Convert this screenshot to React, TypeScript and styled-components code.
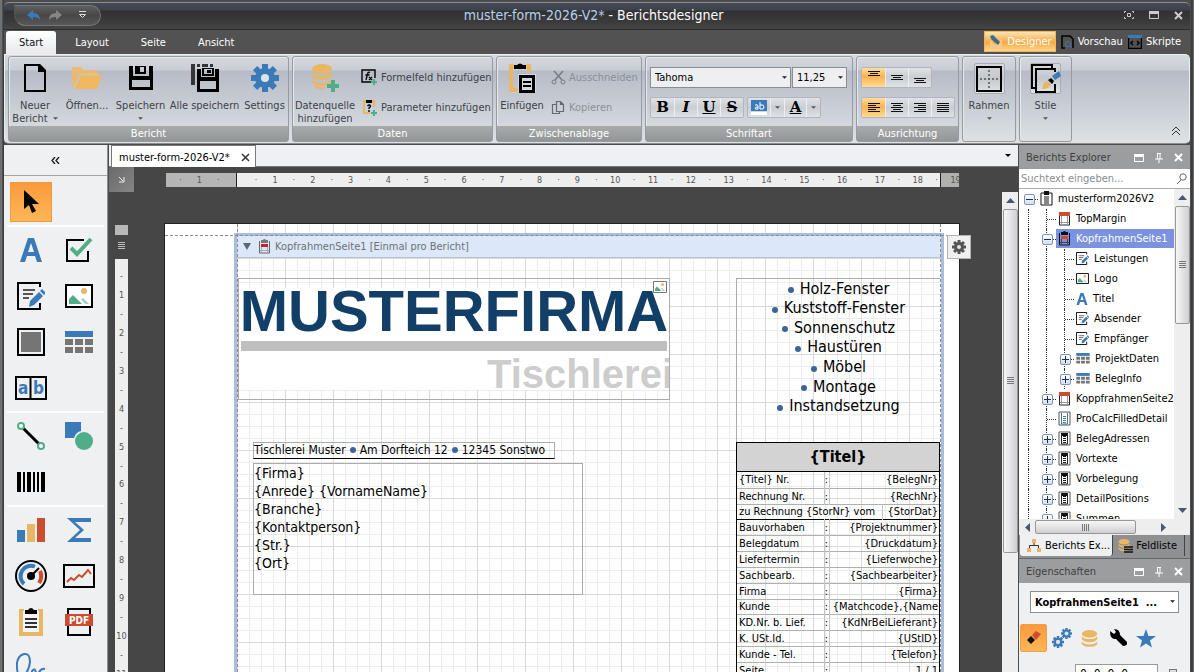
import React from "react";
import styled, { createGlobalStyle, css } from "styled-components";

const BLUE = "#3a7ab8";
const GREEN = "#4fae87";
const AMBER = "#e9b665";
const RED = "#cb4c2f";
const FACE = '"DejaVu Sans Condensed", "Noto Sans", sans-serif';

const GlobalStyle = createGlobalStyle`
  *, *::before, *::after { box-sizing: border-box; }
  html, body { margin: 0; height: 100%; }
  body { overflow: hidden; background: #55575a; }
  body, button, input, select { font-family: ${FACE}; font-size: 11px; line-height: 13px; }
  button { padding: 0; border: 0; background: none; color: inherit; }
  button, select { cursor: pointer; }
  svg { display: block; flex: none; }
`;

/* ---------- window frame ---------- */

const Window = styled.div`
  display: flex;
  flex-direction: column;
  height: 100vh;
  padding: 2px 4px 0;
  background: linear-gradient(to right, #6f7274 0, #6f7274 2px, #2d2d2d 3px, #4c4c4c 4px, #4c4c4c calc(100% - 3px), #2d2d2d calc(100% - 2px), #7b7d7f 100%);
`;

const TitleBar = styled.header`
  display: grid;
  grid-template-columns: 1fr auto 1fr;
  align-items: center;
  height: 28px;
  flex: none;
  padding: 0 7px 2px 0;
  border-top: 1px solid #8b8f95;
  border-bottom: 1px solid #2c2c2c;
  border-radius: 5px 5px 0 0;
  background: linear-gradient(#454a55 0, #3d424c 7px, #303132 8px, #3b3b3b 19px, #454545 100%);
`;

const QuickAccess = styled.div`
  display: flex;
  align-items: center;
  gap: 8px;
  width: 87px;
  height: 21px;
  margin-left: 10px;
  padding-left: 12px;
  border: 1px solid #757575;
  border-left-color: #555;
  border-radius: 0 11px 11px 12px;
  background: linear-gradient(#5f5f5f, #474747 50%, #575757);
  button:last-child { margin-left: 8px; }
`;

const WindowTitle = styled.h1`
  margin: 0;
  font-size: 14px;
  line-height: 18px;
  font-weight: 400;
  color: #fff;
  span { color: #b9cff0; }
`;

const WindowControls = styled.div`
  display: flex;
  justify-content: flex-end;
  align-items: center;
  gap: 15px;
`;

const TabRow = styled.div`
  display: flex;
  justify-content: space-between;
  height: 24px;
  flex: none;
  padding: 1px 9px 0 2px;
  background: #525252;
`;

const TabGroup = styled.div`
  display: flex;
  align-items: stretch;
`;

const RibbonTab = styled.button<{ $active?: boolean }>`
  padding: 0 13px;
  margin-right: 6px;
  border-radius: 3px 3px 0 0;
  color: ${(p) => (p.$active ? "#111" : "#fff")};
  background: ${(p) => (p.$active ? "linear-gradient(#fff, #e6e9ee)" : "none")};
`;

const ViewTab = styled.button<{ $active?: boolean }>`
  display: flex;
  align-items: center;
  gap: 4px;
  height: 21px;
  padding: 0 0 0 4px;
  margin-left: 1px;
  color: #fff;
  ${(p) => p.$active && css`
    padding-right: 3px;
    border: 1px solid #f3b35a;
    background: linear-gradient(#fde3b0, #f2a946 55%, #ffd88c);
  `}
`;

/* ---------- ribbon ---------- */

const Ribbon = styled.div`
  display: flex;
  gap: 3px;
  height: 90px;
  flex: none;
  padding: 1px 8px 1px 3px;
  border: 1px solid #eceef0;
  border-bottom-color: #8b8d8f;
  border-radius: 0 5px 5px 5px;
  background: linear-gradient(#d5d9df 0, #c9cdd5 15px, #b6bbc6 16px, #dde2e5 100%);
`;

const Group = styled.section<{ $w: number }>`
  display: flex;
  flex-direction: column;
  width: ${(p) => p.$w}px;
  flex: none;
  border: 1px solid #969ba3;
  border-radius: 3px;
  box-shadow: inset 1px 1px 0 #e6e9ec;
`;

const GroupBody = styled.div`
  display: flex;
  flex: 1;
  min-height: 0;
`;

const GroupCaption = styled.h2`
  margin: 0;
  height: 15px;
  flex: none;
  line-height: 15px;
  font-size: 11px;
  font-weight: 400;
  text-align: center;
  color: #fff;
  background: linear-gradient(#a7abac, #939696);
`;

const BigButton = styled.button<{ $w: number }>`
  display: flex;
  flex-direction: column;
  align-items: center;
  width: ${(p) => p.$w}px;
  padding-top: 6px;
  color: #3d4148;
  white-space: nowrap;
`;

const BigIcon = styled.span`
  display: grid;
  place-items: center;
  height: 30px;
  margin-bottom: 6px;
`;

const Line = styled.span`
  display: flex;
  align-items: center;
  gap: 5px;
  min-height: 13px;
`;

const SmallList = styled.div`
  display: flex;
  flex-direction: column;
  gap: 10px;
  padding-top: 10px;
  padding-left: 4px;
`;

const SmallButton = styled.button`
  display: flex;
  align-items: center;
  gap: 3px;
  height: 20px;
  color: #3d4148;
  white-space: nowrap;
  &:disabled { color: #8b9097; }
`;

const Controls = styled.div`
  display: flex;
  flex-direction: column;
  gap: 9px;
  padding: 10px 4px 0;
`;

const ControlRow = styled.div`
  display: flex;
  gap: 1px;
`;

const Combo = styled.span<{ $w: number; $h: number }>`
  position: relative;
  display: block;
  width: ${(p) => p.$w}px;
  height: ${(p) => p.$h}px;
  select {
    width: 100%;
    height: 100%;
    padding: 0 14px 0 4px;
    border: 1px solid #8a8d92;
    border-radius: 0;
    background: #eeeff0;
    color: #000;
    appearance: none;
  }
  svg { position: absolute; right: 4px; top: 50%; margin-top: -2px; pointer-events: none; }
`;

const Segments = styled.div`
  display: flex;
  height: 21px;
  border: 1px solid #b2b6bc;
  border-radius: 2px;
  background: linear-gradient(#dfe2e6, #c9ced4 50%, #dde3e5);
  & + & { margin-left: 2px; }
`;

const Segment = styled.button<{ $on?: boolean; $w?: number }>`
  display: grid;
  place-items: center;
  width: ${(p) => p.$w ?? 23}px;
  color: #000;
  font: 700 15px/15px "DejaVu Serif", serif;
  border-left: 1px solid #eceef0;
  &:first-child { border-left: 0; }
  ${(p) => p.$on && css`background: linear-gradient(#ffdf9d, #f9b351 45%, #ffdc93);`}
`;

const IconFrame = styled.span`
  display: grid;
  place-items: center;
  width: 31px;
  height: 31px;
  border: 1px solid #a9adb5;
  border-radius: 2px;
  background: linear-gradient(#d5d9dd, #c3c8cf 50%, #dfe4e6);
`;

const CollapseButton = styled.button`
  align-self: flex-end;
  margin: 0 0 6px auto;
`;

/* ---------- workspace ---------- */

const Workspace = styled.div`
  display: flex;
  flex: 1;
  min-height: 0;
  padding-top: 1px;
`;

const Toolbox = styled.aside`
  width: 104px;
  flex: none;
  overflow: hidden;
  border-right: 1px solid #8d9093;
  background: #eef0f2;
`;

const ToolboxHead = styled.button`
  display: grid;
  place-items: center;
  width: 100%;
  height: 31px;
  border-bottom: 1px solid #a2a5a8;
`;

const ToolGroup = styled.div`
  display: grid;
  grid-template-columns: repeat(2, 48px);
  grid-auto-rows: 46px;
  margin: 0 3px;
  border-bottom: 2px solid #fbfcfc;
  &:first-of-type { margin-top: 3px; }
`;

const Tool = styled.button<{ $on?: boolean }>`
  display: grid;
  place-items: center;
  width: 42px;
  height: 40px;
  margin: 3px;
  ${(p) => p.$on && css`
    border: 1px solid #ee9b3d;
    background: linear-gradient(#fb9a3c, #ffb657);
  `}
`;

const Center = styled.main`
  display: flex;
  flex-direction: column;
  flex: 1;
  min-width: 0;
  margin-left: 1px;
`;

const DocTabs = styled.div`
  display: flex;
  justify-content: space-between;
  height: 22px;
  flex: none;
  padding: 0 6px 0 2px;
  background: #eef0f3;
  border-bottom: 1px solid #777;
`;

const DocTab = styled.div`
  display: flex;
  align-items: center;
  gap: 11px;
  height: 22px;
  padding: 1px 5px 0 7px;
  border: 1px solid #77797c;
  border-bottom: 0;
  background: #fff;
`;

const Canvas = styled.div`
  display: grid;
  grid-template-columns: 25px 1fr 16px;
  grid-template-rows: 25px 1fr;
  flex: 1;
  min-height: 0;
  background: #464646;
  overflow: hidden;
`;

const Corner = styled.button`
  display: grid;
  place-items: center;
  background: linear-gradient(135deg, #6a6a6a, #858585);
`;

const HRuler = styled.div`
  width: 793px;
  height: 14px;
  margin: 6px 0 0 32px;
  overflow: hidden;
  background: linear-gradient(to right, #b5b5b5 70px, #222 70px, #222 71px, #eee 71px, #eee 774px, #222 774px, #222 775px, #b0b0b0 775px);
`;

const HRulerStrip = styled.div`
  display: grid;
  grid-template-columns: repeat(42, 1fr);
  width: 794px;
  height: 14px;
  margin-left: 5px;
`;

const VRulerColumn = styled.div`
  display: flex;
  flex-direction: column;
  align-items: center;
  padding-top: 33px;
  overflow: hidden;
`;

const VRulerStart = styled.div`
  width: 13px;
  height: 10px;
  margin-bottom: 7px;
  background: #b8b8b8;
  flex: none;
`;

const VRuler = styled.div`
  display: grid;
  grid-template-rows: repeat(22, 1fr);
  width: 13px;
  height: 424px;
  flex: none;
  margin-top: 9px;
  padding-top: 8px;
  background: #eeeeee;
`;

const Tick = styled.span`
  display: grid;
  place-items: center;
  font-size: 9px;
  line-height: 12px;
  color: #555;
`;

const PageArea = styled.div`
  padding: 32px 0 0 31px;
  min-width: 0;
`;

const Page = styled.article`
  position: relative;
  width: 794px;
  height: 1123px;
  background: #fff;
  box-shadow: 0 0 0 1px #222;
  color: #000;
`;

const Grid = styled.div`
  position: absolute;
  inset: 0 18px 0 72px;
  background-image:
    linear-gradient(to right, #d8dadc 1px, transparent 1px),
    linear-gradient(#d8dadc 1px, transparent 1px),
    linear-gradient(to right, #ebebeb 1px, transparent 1px),
    linear-gradient(#ebebeb 1px, transparent 1px);
  background-size: 48px 48px, 48px 48px, 12px 12px, 12px 12px;
  background-position: 0 34px;
`;

const MarginTop = styled.div`
  position: absolute;
  inset: 11px 0 auto 0;
  border-top: 1px dashed #8c8c8c;
`;

const MarginSides = styled.div`
  position: absolute;
  inset: 0 18px 0 72px;
  border: 0 dashed #8c8c8c;
  border-width: 0 1px;
`;

const Band = styled.section`
  position: absolute;
  inset: 9px 15px -4px 69px;
  border: 3px solid #a9bedb;
`;

const BandHead = styled.header`
  display: flex;
  align-items: center;
  gap: 7px;
  height: 22px;
  padding: 0 0 1px 6px;
  border-bottom: 1px solid #b9c3d1;
  background: #dce8f9;
  color: #6d7176;
  svg + svg { margin-right: -3px; }
`;

const GearButton = styled.button`
  position: absolute;
  left: 782px;
  top: 11px;
  display: grid;
  place-items: center;
  width: 24px;
  height: 24px;
  border: 1px solid #b3b3b3;
  background: #f0f0f0;
`;

const Item = styled.div<{ $x: number; $y: number; $w: number; $h?: number }>`
  position: absolute;
  left: ${(p) => p.$x}px;
  top: ${(p) => p.$y}px;
  width: ${(p) => p.$w}px;
  height: ${(p) => (p.$h ? `${p.$h}px` : "auto")};
  border: 1px solid #ababab;
`;

const LogoBox = styled(Item)`
  overflow: hidden;
  padding-top: 9px;
  font-family: "Liberation Sans", sans-serif;
  font-weight: 700;
  white-space: nowrap;
`;

const LogoArt = styled.div`
  background: #fff;
  height: 102px;
`;

const LogoName = styled.div`
  display: flex;
  justify-content: center;
  height: 53px;
  font-size: 58px;
  line-height: 45px;
  color: #123f68;
`;

const LogoBar = styled.div`
  height: 10px;
  margin: 0 2px;
  background: #bfbfbf;
`;

const LogoSub = styled.div`
  margin-left: 248px;
  font-size: 40px;
  line-height: 46px;
  color: #cdcdcd;
`;

const LogoTag = styled.span`
  position: absolute;
  right: 2px;
  top: 2px;
`;

const Services = styled(Item)`
  border-width: 1px 0 0 1px;
`;

const ServiceList = styled.ul`
  display: grid;
  grid-template-rows: repeat(7, 1fr);
  height: 137px;
  margin: 0;
  padding: 0;
  list-style: none;
  font-size: 16px;
  line-height: 18px;
  li { display: flex; justify-content: center; align-items: center; gap: 6px; }
  li::before { content: ""; width: 6px; height: 6px; margin-top: 3px; border-radius: 50%; background: #3b659a; }
`;

const Sender = styled(Item)`
  display: flex;
  align-items: center;
  gap: 4px;
  padding-bottom: 2px;
  font-size: 12px;
  line-height: 14px;
  border-bottom: 1px solid #000;
  white-space: nowrap;
`;

const Dot = styled.i`
  width: 6px;
  height: 6px;
  border-radius: 50%;
  background: #3b659a;
`;

const Recipient = styled(Item)`
  font-size: 14px;
  line-height: 18px;
`;

const RecipientLines = styled.div`
  display: grid;
  grid-template-rows: repeat(6, 1fr);
  height: 106px;
`;

const InfoBox = styled(Item)`
  border: 1px solid #000;
`;

const InfoTable = styled.table`
  width: 100%;
  border-collapse: collapse;
  table-layout: fixed;
  line-height: 13px;
  caption {
    height: 29px;
    font-size: 16px;
    font-weight: 700;
    line-height: 27px;
    background: #d3d3d3;
    border-bottom: 1px solid #000;
  }
`;

const InfoCol = styled.col<{ $w?: number }>`
  width: ${(p) => (p.$w ? `${p.$w}px` : "auto")};
`;

const InfoRow = styled.tr<{ $tight?: boolean; $rule?: boolean }>`
  height: ${(p) => (p.$tight ? 15 : 16)}px;
  border-bottom: 1px solid ${(p) => (p.$rule ? "#000" : "#b0b0b0")};
  th, td {
    padding: 0 2px;
    font-weight: 400;
    text-align: left;
    white-space: nowrap;
    overflow: hidden;
  }
  td:last-child { text-align: right; border-left: 1px solid #c4c4c4; padding-right: 1px; }
  td:nth-child(2):not(:last-child) { padding: 0; text-align: center; border-left: 1px solid #c4c4c4; }
`;

/* ---------- scroll bars ---------- */

const VScroll = styled.div`
  display: flex;
  flex-direction: column;
  align-items: center;
  width: 16px;
  background: #eeeeee;
  grid-row: 2;
  grid-column: 3;
`;

const ScrollArrow = styled.button<{ $w?: number; $end?: boolean }>`
  display: grid;
  place-items: center;
  width: ${(p) => p.$w ?? 16}px;
  height: 17px;
  flex: none;
  margin-top: ${(p) => (p.$end ? "auto" : "0")};
`;

const VThumb = styled.div<{ $h: number }>`
  display: grid;
  place-items: center;
  width: 15px;
  height: ${(p) => p.$h}px;
  border: 1px solid #979797;
  border-radius: 2px;
  background: linear-gradient(to right, #f6f6f6, #e4e4e6 50%, #cdced1);
`;

const HScroll = styled.div`
  display: flex;
  align-items: center;
  height: 16px;
  flex: none;
  background: #eeeeee;
`;

const HThumb = styled.div`
  display: grid;
  place-items: center;
  flex: 1;
  height: 14px;
  border: 1px solid #979797;
  border-radius: 2px;
  background: linear-gradient(#f6f6f6, #e4e4e6 50%, #cdced1);
`;

/* ---------- side panels ---------- */

const Side = styled.aside`
  display: flex;
  flex-direction: column;
  width: 171px;
  flex: none;
  margin-left: 1px;
  background: #eef0f2;
`;

const Explorer = styled.section`
  display: flex;
  flex-direction: column;
  flex: 1;
  min-height: 0;
`;

const PanelHead = styled.header`
  display: flex;
  align-items: center;
  gap: 11px;
  height: 24px;
  flex: none;
  padding: 1px 7px 0;
  background: #9c9d9e;
  color: #3e3f40;
  h2 { margin: 0; font-size: 11px; font-weight: 400; flex: 1; }
`;

const SearchBox = styled.label`
  display: flex;
  align-items: center;
  height: 20px;
  flex: none;
  padding: 0 3px 0 2px;
  border-bottom: 1px solid #aaa;
  background: #fff;
  input { flex: 1; min-width: 0; padding: 0; border: 0; outline: 0; background: none; }
  input::placeholder { color: #8a8d90; opacity: 1; }
`;

const TreeArea = styled.div`
  display: flex;
  flex: 1;
  min-height: 0;
`;

const Tree = styled.ul`
  flex: 1;
  min-width: 0;
  margin: 0;
  padding: 0 0 0 1px;
  overflow: hidden;
  list-style: none;
  background: #fff;
`;

const TreeRow = styled.li`
  display: flex;
  height: 20px;
  white-space: nowrap;
`;

const Guide = styled.span<{ $line?: boolean; $stub?: boolean }>`
  position: relative;
  display: grid;
  place-items: center;
  width: 18px;
  flex: none;
  &::before {
    content: "";
    position: absolute;
    inset: 0 auto 0 8px;
    border-left: ${(p) => (p.$line ? "1px dotted #333" : "0")};
  }
  &::after {
    content: "";
    position: absolute;
    inset: 10px 0 auto 9px;
    border-top: ${(p) => (p.$stub ? "1px dotted #333" : "0")};
  }
`;

const Expander = styled.button`
  position: relative;
  z-index: 1;
  display: grid;
  place-items: center;
  width: 11px;
  height: 11px;
  border: 1px solid #7f95b8;
  border-radius: 2px;
  background: linear-gradient(#fff, #d3def0);
`;

const Node = styled.span<{ $on?: boolean }>`
  display: flex;
  align-items: center;
  gap: 5px;
  flex: 1;
  height: 19px;
  padding-left: 2px;
  color: ${(p) => (p.$on ? "#fff" : "#000")};
  background: ${(p) => (p.$on ? "#7b93de" : "none")};
`;

const PanelTabs = styled.div`
  display: flex;
  height: 23px;
  flex: none;
  padding: 0 4px 2px 1px;
  background: #8f9091;
`;

const PanelTab = styled.button<{ $on?: boolean }>`
  display: flex;
  align-items: center;
  gap: 4px;
  padding: 0 2px 0 7px;
  white-space: nowrap;
  border-right: 1px solid #444;
  background: ${(p) => (p.$on ? "#eef0f2" : "none")};
  border-radius: ${(p) => (p.$on ? "0 0 3px 3px" : "0")};
  & + & { gap: 3px; padding-left: 5px; padding-right: 7px; }
`;

const Properties = styled.section`
  height: 114px;
  flex: none;
  overflow: hidden;
  border-top: 1px solid #666;
`;

const PropertyBody = styled.div`
  display: flex;
  flex-direction: column;
  padding: 8px 11px 0;
  select { background: #fff; font-weight: 700; }
`;

const PropertyTabs = styled.div`
  display: flex;
  margin: 11px 0 0 -10px;
  gap: 1px;
`;

const PropertyTab = styled.button<{ $on?: boolean }>`
  display: grid;
  place-items: center;
  width: 27px;
  height: 28px;
  ${(p) => p.$on && css`
    border: 1px solid #f0a044;
    border-radius: 2px;
    background: linear-gradient(#fb9a3c, #ffb657);
  `}
`;

const PropertyRow = styled.div`
  display: flex;
  justify-content: space-between;
  margin: 12px 2px 0 45px;
  input[type="text"] { width: 83px; height: 20px; padding: 2px 4px; border: 1px solid #999; font-size: 12px; }
  input[type="checkbox"] { width: 8px; height: 8px; margin: 5px 0 0; appearance: none; border: 1px solid #777; background: #ddd; }
`;

/* ---------- icons ---------- */

type IconProps = { w?: number; h?: number; vb?: string; children: React.ReactNode };
const Icon = ({ w = 16, h = w, vb, children }: IconProps) => (
  <svg width={w} height={h} viewBox={vb ?? `0 0 ${w} ${h}`} fill="none" aria-hidden="true">{children}</svg>
);

const Caret = ({ color = "#555", size = 5 }) => (
  <Icon w={size} h={3} vb="0 0 6 3"><path d="M0 0h6L3 3z" fill={color} /></Icon>
);

const Plus = ({ x, y, s }: { x: number; y: number; s: number }) => (
  <path d={`M${x + s / 2} ${y}v${s}M${x} ${y + s / 2}h${s}`} stroke={GREEN} strokeWidth={s / 3} />
);

const NewDoc = () => (
  <Icon w={24} h={28}><path d="M2 1h14l6 6v20H2z" stroke="#000" strokeWidth="2" /><path d="M15 0h2l6 6v2h-8z" fill="#000" /></Icon>
);
const OpenFolder = () => (
  <Icon w={32} h={26}><path d="M1 22V2h9l2 3h14v5H9L3 22z" fill="#eaba74" /><path d="M10 10h21l-5 14H4z" fill="#f0b85f" /><path d="M9.500 9.500h18M9.500 9.500L4 21" stroke="#cfc8bd" /></Icon>
);
const Floppy = () => (
  <Icon w={26} h={26}><path fillRule="evenodd" d="M1 1h4v10h16V1h4v24H1zM4 15v7h18v-7zM7 1h11v8H7zM12 2v5h4V2z" fill="#000" /></Icon>
);
const FloppyAll = () => (
  <Icon w={30} h={30}>
    <path d="M1 1h4v21H1zM7 1h3v3H7zM12 1h6v3h-6zM20 1h3v3h-3z" fill="#333539" />
    <path fillRule="evenodd" d="M7 6h4v8h14V6h4v23H7zM10 18v8h16v-8zM12 5h12v8H12zM14 6v5h8V6zM17 7h4v3h-4z" fill="#000" />
  </Icon>
);
const Gear = ({ size = 28, color = BLUE, hole = 4 }) => (
  <Icon w={size} h={size} vb="-14 -14 28 28">
    {[0, 45, 90, 135].map((a) => <rect key={a} x="-3" y="-14" width="6" height="28" fill={color} transform={`rotate(${a})`} />)}
    <circle r="10" fill={color} />
    <circle r={hole} fill="#dfe3e8" />
  </Icon>
);
const Coins = () => (
  <>
    <ellipse cx="11" cy="5" rx="10" ry="5" fill={AMBER} />
    <path d="M1 8c3 5 17 5 20 0v4c-3 5-17 5-20 0zM1 15c3 5 17 5 20 0v3c-3 5-17 5-20 0z" fill={AMBER} />
  </>
);
const DataAdd = () => (
  <Icon w={28} h={28}><Coins /><path d="M3 21q5 3 11 2v2q-7 1-11-2z" fill={AMBER} /><Plus x={16} y={16} s={12} /></Icon>
);
const DataStack = ({ s = 18 }) => <Icon w={s} h={s} vb="0 0 22 22"><Coins /></Icon>;
const FieldAdd = () => (
  <Icon w={17} h={16}>
    <path d="M10 13H1V1h13v8" stroke="#000" strokeWidth="1.4" />
    <path d="M9 3.500q-2-1-2.500 1.500L5 11M4.500 6h4M8 8l3 3M11 8l-3 3" stroke="#000" strokeWidth="1.300" />
    <Plus x={10} y={10} s={6} />
  </Icon>
);
const ParamAdd = () => (
  <Icon w={17} h={17}>
    <path d="M5 2H3v12h6M11 2h2v6" stroke={AMBER} strokeWidth="2" />
    <path d="M5 1h6v3H5z" fill="#000" />
    <path d="M6.500 7q2-2 3 0q0 1-1.500 2v1M8 11v2" stroke="#000" strokeWidth="1.400" />
    <Plus x={10} y={11} s={6} />
  </Icon>
);
const Paste = () => (
  <Icon w={28} h={30}>
    <path d="M6 3H3v24h7M18 3h3v6" stroke={AMBER} strokeWidth="4" />
    <path d="M6 2h3q3-3 6 0h3v4H6z" fill="#000" />
    <path d="M10 11h18v19H10z" fill="#d3d8de" />
    <path d="M12.500 13.500h13v15h-13z" stroke="#000" strokeWidth="3" />
    <path d="M15 19h8M15 23h8" stroke="#000" strokeWidth="2" />
  </Icon>
);
const Scissors = () => (
  <Icon w={15} h={15}><path d="M3 1l8 9M12 1l-8 9" stroke="#777b81" strokeWidth="1.500" /><circle cx="3" cy="12" r="2" stroke="#777b81" /><circle cx="12" cy="12" r="2" stroke="#777b81" /></Icon>
);
const CopyIcon = () => (
  <Icon w={15} h={15}><path d="M5 13.500H1.500V4.500H5M5.500 1.500h4l3 3v7h-7zM9.500 1.500v3h3M8.500 11.500v2h-4" stroke="#666a70" strokeWidth="1.200" /></Icon>
);
const AlignIcon = ({ lines, dy = 0 }: { lines: [number, number][]; dy?: number }) => (
  <Icon w={14} h={14}>
    {lines.map(([x, w], i) => <path key={i} d={`M${x} ${i * 2 + 2.5 + dy}h${w}`} stroke="#111" />)}
  </Icon>
);
const Highlight = () => (
  <Icon w={16} h={15}>
    <rect width="16" height="11" fill={BLUE} /><rect y="12" width="16" height="3" fill="#fff" />
    <path d="M4 5q3-1 3 1v3q-3 1-3-1q0-1 3-1M9 2v7q4 1 4-2t-4-2" stroke="#fff" />
  </Icon>
);
const FrameIcon = () => (
  <Icon w={26} h={26}><path d="M1 1h24v24H1z" stroke="#000" strokeWidth="2" /><path d="M13 4v18M4 13h18" stroke="#555" strokeWidth="1.500" strokeDasharray="2 2" /></Icon>
);
const Styles = () => (
  <Icon w={30} h={30}>
    <path d="M4 24H1V1h20v3" stroke="#000" strokeWidth="2" />
    <path d="M24 8V5H5v23h19v-8" stroke="#000" strokeWidth="2" />
    <path d="M11 25q1-7 5-8l4 3q-1 5-9 5z" fill={AMBER} /><path d="M17 16l3-2 3 3-2 3z" fill="#000" />
    <path d="M21 12l7-5 2 5-6 4z" fill={BLUE} />
  </Icon>
);
const DoubleUp = () => <Icon w={10} h={10}><path d="M1 5l4-4 4 4M1 9l4-4 4 4" stroke="#333" /></Icon>;

const Cursor = () => <Icon w={18} h={25}><path d="M2 0v19l5-4 3 8 4-2-4-7h7z" fill="#000" /></Icon>;
const LetterA = ({ s = 24 }) => (
  <Icon w={s} h={s} vb="0 0 24 24"><path fillRule="evenodd" d="M9 0h6l8 24h-5l-2-6H8l-2 6H1zM12 5l-3 9h6z" fill={BLUE} /></Icon>
);
const CheckTool = () => (
  <Icon w={28} h={26}><path d="M19 3H2v21h21V14" stroke="#000" strokeWidth="2" /><path d="M6 11l6 6L26 2" stroke={GREEN} strokeWidth="4" /></Icon>
);
const RichText = ({ s = 28 }) => (
  <Icon w={s} h={s} vb="0 0 28 28">
    <path d="M23 5V1H1v26h22v-6" stroke="#000" strokeWidth="2" />
    <path d="M6 8h12M6 12h10M6 16h6" stroke="#555" strokeWidth="1.800" />
    <path d="M13 19l9-9 4 4-9 9-5 2zM23 9l2-2 4 4-2 2z" fill={BLUE} />
  </Icon>
);
const Picture = ({ s = 28, frame = "#000" }) => (
  <Icon w={s} h={Math.round(s * 0.86)} vb="0 0 28 24">
    <path d="M1 1h26v22H1z" stroke={frame} strokeWidth="2" fill="#fff" />
    <circle cx="19" cy="7" r="3" fill={AMBER} /><path d="M4 20v-5l4-4 9 9z" fill={GREEN} /><path d="M16 15l2-1 6 6h-4z" fill="#a3cfbb" />
  </Icon>
);
const PanelTool = () => <Icon w={28}><path d="M1 1h26v26H1z" stroke="#000" strokeWidth="2" /><path d="M4 4h20v20H4z" fill="#757575" /></Icon>;
const TableTool = ({ s = 28 }) => (
  <Icon w={s} h={Math.round(s * 0.82)} vb="0 0 28 23"><path d="M0 0h28v6H0z" fill={BLUE} /><path d="M0 8h8v6H0zM10 8h8v6h-8zM20 8h8v6h-8zM0 16h8v6H0zM10 16h8v6h-8zM20 16h8v6h-8z" fill="#757575" /></Icon>
);
const CharComb = () => (
  <Icon w={32} h={24}>
    <path d="M1 1h30v22H1zM15.500 1v22" stroke="#000" strokeWidth="2" />
    <text x="3" y="18" fontSize="17" fontWeight="700" fill={BLUE}>a</text><text x="18" y="18" fontSize="17" fontWeight="700" fill={BLUE}>b</text>
  </Icon>
);
const LineTool = () => (
  <Icon w={28}><path d="M6 6l16 16" stroke="#000" strokeWidth="3" /><circle cx="4" cy="4" r="3" stroke={GREEN} strokeWidth="2" fill="#fff" /><circle cx="24" cy="24" r="3" stroke={GREEN} strokeWidth="2" fill="#fff" /></Icon>
);
const ShapeTool = () => <Icon w={28}><path d="M0 0h16v9q-5 1-7 7H0z" fill={BLUE} /><circle cx="19" cy="19" r="9" fill={GREEN} /></Icon>;
const Barcode = () => <Icon w={28} h={20}><path d="M0 0h4v20H0zM6 0h2v20H6zM10 0h4v20h-4zM16 0h2v20h-2zM20 0h2v20h-2zM24 0h4v20h-4z" fill="#000" /></Icon>;
const ChartTool = () => <Icon w={28} h={24}><path d="M0 12h8v12H0z" fill={BLUE} /><path d="M10 6h8v18h-8z" fill={AMBER} /><path d="M20 0h8v24h-8z" fill={RED} /></Icon>;
const Sigma = () => <Icon w={24}><path d="M0 0h24v4H8l9 8-9 8h16v4H0l13-12z" fill={BLUE} /></Icon>;
const Gauge = () => (
  <Icon w={32}>
    <circle cx="16" cy="16" r="15" stroke="#000" strokeWidth="2" />
    <path d="M9 24A10.500 10.500 0 0 1 20 6.500" stroke={BLUE} strokeWidth="4" /><path d="M25 11q3 6-1 12" stroke={RED} strokeWidth="4" />
    <circle cx="16" cy="16" r="4" fill="#000" /><path d="M16 16l8-8" stroke="#000" strokeWidth="2" />
  </Icon>
);
const Spark = () => <Icon w={32} h={24}><path d="M1 1h30v22H1z" stroke="#000" strokeWidth="2" /><path d="M4 18l4-4 3 2 5-5 3 2 6-7 3 4" stroke={RED} strokeWidth="2" /></Icon>;
const ClipTool = () => (
  <Icon w={24} h={28}><path d="M5 3H2v23h20V3h-3" stroke={AMBER} strokeWidth="4" /><path d="M4 3h16v21H4z" fill="#f4f5f6" /><path d="M6 2h3q3-4 6 0h3v4H6z" fill="#000" /><path d="M6 11h12M6 15h12M6 19h12" stroke="#333" strokeWidth="2" /></Icon>
);
const PdfTool = () => (
  <Icon w={28}><path d="M3 1h22v26H3z" stroke="#000" strokeWidth="2" /><path d="M0 6h28v12H0z" fill={RED} /><text x="14" y="16" fontSize="10" fontWeight="700" textAnchor="middle" fill="#fff">PDF</text></Icon>
);
const Signature = () => <Icon w={30} h={32}><path d="M1 30q12-8 13-20Q14 1 8 2Q0 4 1 16q1 12 9 14q5 0 6-11q3-4 4 2q-1 6 2 1q3-6 7-5" stroke={BLUE} strokeWidth="2" /></Icon>;

const ReportIcon = () => <Icon w={13} h={15}><path d="M1 2h11v12H1zM4 6h5M4 8h5M4 10h5M4 12h5" stroke="#111" /><path d="M4 0h5v4H4z" fill="#111" /></Icon>;
const MarginIcon = () => <Icon w={13} h={14}><path d="M1.500 1v12h10V1" stroke="#222" /><path d="M3.500 4v8M9.500 4v8M2 10.500h9" stroke="#999" /><path d="M1 0h11v4H1z" fill={RED} /></Icon>;
const BandIcon = ({ muted = false }) => (
  <Icon w={13} h={15}><path d="M1.500 2v12h10V2" stroke={muted ? "#666" : "#111"} /><path d="M3.500 5v8M9.500 5v8M2 11.500h9" stroke={muted ? "#aaa" : "#444"} /><path d="M3 1h2q1-2 3 0h2v3H3z" fill={muted ? "#777" : "#111"} /><path d="M3 5h7v3H3z" fill={muted ? "#c5202c" : RED} /></Icon>
);
const DetailIcon = ({ clip = true }) => (
  <Icon w={13} h={15}><path d="M1 1h11v13H1z" stroke="#555" /><path d="M3.500 2v11h6V2M5 5.500h3M5 7.500h3M5 9.500h3M5 11.500h3" stroke={clip ? "#222" : "#4c7795"} />{clip && <path d="M4 2h5v3H4z" fill="#111" />}</Icon>
);

const PinIcon = () => <Icon w={8} h={10}><path d="M2.500 1v5M5 1v5M2 .5h4M0 6h8M4 6v4" stroke="#fff" /></Icon>;
const RestoreIcon = ({ c = "#fff" }) => <Icon w={10} h={8}><path d="M.5 1v6.500h9V1" stroke={c} /><path d="M0 0h10v3H0z" fill={c} /></Icon>;
const CloseIcon = ({ c = "#fff", s = 9 }) => <Icon w={s} vb="0 0 9 9"><path d="M1 1l7 7M8 1L1 8" stroke={c} strokeWidth="2" /></Icon>;
const Search = () => <Icon w={11} h={12}><circle cx="7" cy="4" r="3.200" stroke="#666" /><path d="M5 7l-4 4" stroke="#666" /></Icon>;
const Tri = ({ d }: { d: string }) => <Icon w={9}><path d={d} fill="#4a5673" /></Icon>;
const GripH = () => <Icon w={7} h={8}><path d="M0 .5h7M0 2.500h7M0 4.500h7M0 6.500h7" stroke="#777" /></Icon>;
const GripV = () => <Icon w={8} h={7}><path d="M.5 0v7M2.500 0v7M4.500 0v7M6.500 0v7" stroke="#777" /></Icon>;

/* ---------- data ---------- */

const ticks = Array.from({ length: 42 }, (_, i) => (i - 3) / 2);
const vTicks = Array.from({ length: 22 }, (_, i) => (i + 1) / 2);

const services = ["Holz-Fenster", "Kuststoff-Fenster", "Sonnenschutz", "Haustüren", "Möbel", "Montage", "Instandsetzung"];
const recipient = ["{Firma}", "{Anrede} {VornameName}", "{Branche}", "{Kontaktperson}", "{Str.}", "{Ort}"];
const info: [string, string][] = [
  ["Bauvorhaben", "{Projektnummer}"], ["Belegdatum", "{Druckdatum}"], ["Liefertermin", "{Lieferwoche}"],
  ["Sachbearb.", "{Sachbearbeiter}"], ["Firma", "{Firma}"], ["Kunde", "{Matchcode},{Name"],
  ["KD.Nr. b. Lief.", "{KdNrBeiLieferant}"], ["K. USt.Id.", "{UStID}"], ["Kunde - Tel.", "{Telefon}"], ["Seite", "1 / 1"],
];

type TreeItem = { level: number; text: string; icon: React.ReactNode; sign?: "+" | "-"; on?: boolean };
const tree: TreeItem[] = [
  { level: 0, text: "musterform2026V2", icon: <ReportIcon />, sign: "-" },
  { level: 1, text: "TopMargin", icon: <MarginIcon /> },
  { level: 1, text: "KopfrahmenSeite1", icon: <BandIcon />, sign: "-", on: true },
  { level: 2, text: "Leistungen", icon: <RichText s={13} /> },
  { level: 2, text: "Logo", icon: <Picture s={13} /> },
  { level: 2, text: "Titel", icon: <LetterA s={12} /> },
  { level: 2, text: "Absender", icon: <RichText s={13} /> },
  { level: 2, text: "Empfänger", icon: <RichText s={13} /> },
  { level: 2, text: "ProjektDaten", icon: <TableTool s={14} />, sign: "+" },
  { level: 2, text: "BelegInfo", icon: <TableTool s={14} />, sign: "+" },
  { level: 1, text: "KoppfrahmenSeite2", icon: <MarginIcon />, sign: "+" },
  { level: 1, text: "ProCalcFilledDetail", icon: <DetailIcon clip={false} /> },
  { level: 1, text: "BelegAdressen", icon: <DetailIcon />, sign: "+" },
  { level: 1, text: "Vortexte", icon: <DetailIcon />, sign: "+" },
  { level: 1, text: "Vorbelegung", icon: <DetailIcon />, sign: "+" },
  { level: 1, text: "DetailPositions", icon: <DetailIcon />, sign: "+" },
  { level: 1, text: "Summen", icon: <DetailIcon />, sign: "+" },
];

const toolGroups: [string, React.ReactNode][][] = [
  [["Zeiger", <Cursor />]],
  [["Beschriftung", <LetterA />], ["Kontrollkästchen", <CheckTool />], ["Rich Text", <RichText />], ["Bild", <Picture />],
    ["Panel", <PanelTool />], ["Tabelle", <TableTool />], ["Zeichenkamm", <CharComb />]],
  [["Linie", <LineTool />], ["Form", <ShapeTool />], ["Barcode", <Barcode />]],
  [["Diagramm", <ChartTool />], ["Summe", <Sigma />], ["Anzeige", <Gauge />], ["Sparkline", <Spark />],
    ["Unterbericht", <ClipTool />], ["PDF", <PdfTool />], ["Signatur", <Signature />]],
];

/* ---------- sections ---------- */

const RibbonBar = () => (
  <Ribbon>
    <Group $w={281}>
      <GroupBody>
        <BigButton $w={52}><BigIcon><NewDoc /></BigIcon><Line>Neuer</Line><Line>Bericht <Caret /></Line></BigButton>
        <BigButton $w={52}><BigIcon><OpenFolder /></BigIcon><Line>Öffnen...</Line></BigButton>
        <BigButton $w={55}><BigIcon><Floppy /></BigIcon><Line>Speichern</Line><Line><Caret /></Line></BigButton>
        <BigButton $w={73}><BigIcon><FloppyAll /></BigIcon><Line>Alle speichern</Line></BigButton>
        <BigButton $w={47}><BigIcon><Gear /></BigIcon><Line>Settings</Line></BigButton>
      </GroupBody>
      <GroupCaption>Bericht</GroupCaption>
    </Group>
    <Group $w={201}>
      <GroupBody>
        <BigButton $w={64}><BigIcon><DataAdd /></BigIcon><Line>Datenquelle</Line><Line>hinzufügen</Line></BigButton>
        <SmallList>
          <SmallButton><FieldAdd />Formelfeld hinzufügen</SmallButton>
          <SmallButton><ParamAdd />Parameter hinzufügen</SmallButton>
        </SmallList>
      </GroupBody>
      <GroupCaption>Daten</GroupCaption>
    </Group>
    <Group $w={146}>
      <GroupBody>
        <BigButton $w={50}><BigIcon><Paste /></BigIcon><Line>Einfügen</Line></BigButton>
        <SmallList>
          <SmallButton disabled><Scissors />Ausschneiden</SmallButton>
          <SmallButton disabled><CopyIcon />Kopieren</SmallButton>
        </SmallList>
      </GroupBody>
      <GroupCaption>Zwischenablage</GroupCaption>
    </Group>
    <Group $w={208}>
      <GroupBody>
        <Controls>
          <ControlRow>
            <Combo $w={141} $h={21}><select aria-label="Schriftart"><option>Tahoma</option></select><Caret color="#222" /></Combo>
            <Combo $w={55} $h={21}><select aria-label="Schriftgröße"><option>11,25</option></select><Caret color="#222" /></Combo>
          </ControlRow>
          <ControlRow>
            <Segments>
              <Segment aria-label="Fett">B</Segment>
              <Segment aria-label="Kursiv"><em>I</em></Segment>
              <Segment aria-label="Unterstrichen"><u>U</u></Segment>
              <Segment aria-label="Durchgestrichen"><s>S</s></Segment>
            </Segments>
            <Segments>
              <Segment $w={22} aria-label="Hintergrundfarbe"><Highlight /></Segment>
              <Segment $w={14} aria-label="Hintergrundfarbe wählen"><Caret /></Segment>
              <Segment $w={22} aria-label="Schriftfarbe"><u>A</u></Segment>
              <Segment $w={14} aria-label="Schriftfarbe wählen"><Caret /></Segment>
            </Segments>
          </ControlRow>
        </Controls>
      </GroupBody>
      <GroupCaption>Schriftart</GroupCaption>
    </Group>
    <Group $w={103}>
      <GroupBody>
        <Controls>
          <ControlRow>
            <Segments>
              <Segment $on aria-label="Oben"><AlignIcon lines={[[1, 12], [3, 8], [1, 12]]} dy={-2} /></Segment>
              <Segment aria-label="Mitte"><AlignIcon lines={[[1, 12], [3, 8], [1, 12]]} dy={2} /></Segment>
              <Segment aria-label="Unten"><AlignIcon lines={[[1, 12], [3, 8], [1, 12]]} dy={5} /></Segment>
            </Segments>
          </ControlRow>
          <ControlRow>
            <Segments>
              <Segment $on aria-label="Linksbündig"><AlignIcon lines={[[1, 12], [1, 8], [1, 12], [1, 8], [1, 12]]} /></Segment>
              <Segment aria-label="Zentriert"><AlignIcon lines={[[1, 12], [3, 8], [1, 12], [3, 8], [1, 12]]} /></Segment>
              <Segment aria-label="Rechtsbündig"><AlignIcon lines={[[1, 12], [5, 8], [1, 12], [5, 8], [1, 12]]} /></Segment>
              <Segment aria-label="Blocksatz"><AlignIcon lines={[[1, 12], [1, 12], [1, 12], [1, 12], [1, 12]]} /></Segment>
            </Segments>
          </ControlRow>
        </Controls>
      </GroupBody>
      <GroupCaption>Ausrichtung</GroupCaption>
    </Group>
    <Group $w={54}>
      <BigButton $w={52}><BigIcon><IconFrame><FrameIcon /></IconFrame></BigIcon><Line>Rahmen</Line><Line><Caret /></Line></BigButton>
    </Group>
    <Group $w={53}>
      <BigButton $w={51}><BigIcon><IconFrame><Styles /></IconFrame></BigIcon><Line>Stile</Line><Line><Caret /></Line></BigButton>
    </Group>
    <CollapseButton aria-label="Menüband minimieren"><DoubleUp /></CollapseButton>
  </Ribbon>
);

const ReportPage = () => (
  <Page>
    <Grid />
    <Band>
      <BandHead>
        <Icon w={8} h={7}><path d="M0 0h8L4 7z" fill="#5d6670" /></Icon>
        <BandIcon muted />
        KopfrahmenSeite1 [Einmal pro Bericht]
      </BandHead>
    </Band>
    <MarginTop />
    <MarginSides />
    <LogoBox $x={73} $y={54} $w={432} $h={122}>
      <LogoArt>
        <LogoName>MUSTERFIRMA</LogoName>
        <LogoBar />
        <LogoSub>Tischlerei</LogoSub>
      </LogoArt>
      <LogoTag><Picture s={14} frame="#777" /></LogoTag>
    </LogoBox>
    <Services $x={571} $y={54} $w={204} $h={164}>
      <ServiceList>{services.map((s) => <li key={s}>{s}</li>)}</ServiceList>
    </Services>
    <Sender $x={88} $y={218} $w={302} $h={17}>
      <span>Tischlerei Muster</span><Dot /><span>Am Dorfteich 12</span><Dot /><span>12345 Sonstwo</span>
    </Sender>
    <Recipient $x={88} $y={239} $w={330} $h={132}>
      <RecipientLines>{recipient.map((r) => <span key={r}>{r}</span>)}</RecipientLines>
    </Recipient>
    <InfoBox $x={571} $y={218} $w={204}>
      <InfoTable>
        <caption>{"{Titel}"}</caption>
        <colgroup><InfoCol $w={87} /><InfoCol $w={5} /><InfoCol $w={53} /><InfoCol /></colgroup>
        <tbody>
          <InfoRow><th scope="row">{"{Titel} Nr."}</th><td>:</td><td colSpan={2}>{"{BelegNr}"}</td></InfoRow>
          <InfoRow><th scope="row">Rechnung Nr.</th><td>:</td><td colSpan={2}>{"{RechNr}"}</td></InfoRow>
          <InfoRow $tight $rule><th scope="row" colSpan={3}>{"zu Rechnung {StorNr} vom"}</th><td>{"{StorDat}"}</td></InfoRow>
          {info.map(([k, v]) => (
            <InfoRow key={k} $tight={k === "Kunde"}><th scope="row">{k}</th><td>:</td><td colSpan={2}>{v}</td></InfoRow>
          ))}
        </tbody>
      </InfoTable>
    </InfoBox>
    <GearButton aria-label="Bandoptionen"><Gear size={14} color="#555" hole={4} /></GearButton>
  </Page>
);

const PanelTools = () => (
  <>
    <button aria-label="Maximieren"><RestoreIcon /></button>
    <button aria-label="Anheften"><PinIcon /></button>
    <button aria-label="Schließen"><CloseIcon /></button>
  </>
);

const ReportTree = () => (
  <Tree>
    {tree.map((n) => (
      <TreeRow key={n.text}>
        {Array.from({ length: n.level }, (_, i) => <Guide key={i} $line />)}
        <Guide $line={n.level > 0} $stub>
          {n.sign && (
            <Expander aria-label={n.text}>
              <Icon w={7}><path d={n.sign === "+" ? "M0 3.500h7M3.500 0v7" : "M0 3.500h7"} stroke="#23304a" /></Icon>
            </Expander>
          )}
        </Guide>
        <Node $on={n.on}>{n.icon}<span>{n.text}</span></Node>
      </TreeRow>
    ))}
  </Tree>
);

export default function App() {
  return (
    <Window>
      <GlobalStyle />
      <TitleBar>
        <QuickAccess>
          <button aria-label="Rückgängig"><Icon w={14} h={10}><path d="M0 5l6-5v3q7 0 7 7q-2-3-7-3v3z" fill={BLUE} /></Icon></button>
          <button aria-label="Wiederholen"><Icon w={14} h={10}><path d="M13 5L7 0v3q-7 0-7 7q2-3 7-3v3z" fill="#858585" /></Icon></button>
          <button aria-label="Schnellzugriff anpassen"><Icon w={7} h={8}><path d="M0 .5h7M.5 3.500h6l-3 3z" stroke="#ddd" /></Icon></button>
        </QuickAccess>
        <WindowTitle><span>muster-form-2026-V2*</span> - Berichtsdesigner</WindowTitle>
        <WindowControls>
          <button aria-label="Vollbild"><Icon w={10} h={8}><path d="M.5 2V.5H2M8 .5h1.500V2M9.500 6v1.500H8M2 7.500H.5V6M3.500 2.500h3v3h-3z" stroke="#ccc" /></Icon></button>
          <button aria-label="Maximieren"><RestoreIcon c="#ccc" /></button>
          <button aria-label="Schließen"><CloseIcon c="#ccc" /></button>
        </WindowControls>
      </TitleBar>
      <TabRow>
        <TabGroup>
          <RibbonTab $active>Start</RibbonTab>
          <RibbonTab>Layout</RibbonTab>
          <RibbonTab>Seite</RibbonTab>
          <RibbonTab>Ansicht</RibbonTab>
        </TabGroup>
        <TabGroup>
          <ViewTab $active><Icon w={14} h={14}><path d="M1 14V5l5 5 7-6v10z" fill="#f5c987" /><path d="M1 1l3-1 7 7-2 3-7-6z" fill="#3b6b91" /></Icon>Designer</ViewTab>
          <ViewTab><Icon w={13} h={14}><path d="M4 13H1V1h8l3 3v9" stroke="#000" strokeWidth="1.500" /><circle cx="7" cy="9" r="2.500" stroke={BLUE} /><path d="M9 11l2 2" stroke={BLUE} /></Icon>Vorschau</ViewTab>
          <ViewTab><Icon w={14} h={14}><path d="M0 0h14v3H0z" fill={BLUE} /><path d="M.5 3v10.500h13V3M5 6L3 8l2 2M9 6l2 2-2 2" stroke="#000" strokeWidth="1.500" /></Icon>Skripte</ViewTab>
        </TabGroup>
      </TabRow>
      <RibbonBar />
      <Workspace>
        <Toolbox>
          <ToolboxHead aria-label="Einklappen"><Icon w={9} h={7}><path d="M4 0L1 3.500 4 7M8 0L5 3.500 8 7" stroke="#111" strokeWidth="1.300" /></Icon></ToolboxHead>
          {toolGroups.map((group, g) => (
            <ToolGroup key={g}>
              {group.map(([name, icon]) => <Tool key={name} aria-label={name} $on={g === 0}>{icon}</Tool>)}
            </ToolGroup>
          ))}
        </Toolbox>
        <Center>
          <DocTabs>
            <DocTab>muster-form-2026-V2*<button aria-label="Schließen"><Icon w={9} h={9}><path d="M1 1l7 7M8 1L1 8" stroke="#333" strokeWidth="1.500" /></Icon></button></DocTab>
            <button aria-label="Dokumentliste"><Caret color="#000" size={8} /></button>
          </DocTabs>
          <Canvas>
            <Corner aria-label="Lineal"><Icon w={7} h={7}><path d="M1 1l4 4M6 1v5H1" stroke="#eee" /></Icon></Corner>
            <HRuler>
              <HRulerStrip>{ticks.map((t) => <Tick key={t}>{t === 0 ? "" : t % 1 ? "·" : Math.abs(t)}</Tick>)}</HRulerStrip>
            </HRuler>
            <span />
            <VRulerColumn>
              <VRulerStart />
              <Icon w={7} h={8}><path d="M0 .5h7M0 2.500h7M0 4.500h7M0 6.500h7" stroke="#bbb" /></Icon>
              <VRuler>{vTicks.map((t) => <Tick key={t}>{t % 1 ? "-" : t}</Tick>)}</VRuler>
            </VRulerColumn>
            <PageArea><ReportPage /></PageArea>
            <VScroll>
              <ScrollArrow aria-label="Nach oben"><Tri d="M0 7h9L4.500 2z" /></ScrollArrow>
              <VThumb $h={344}><GripH /></VThumb>
            </VScroll>
          </Canvas>
        </Center>
        <Side>
          <Explorer>
            <PanelHead><h2>Berichts Explorer</h2><PanelTools /></PanelHead>
            <SearchBox><input type="text" aria-label="Suchtext" placeholder="Suchtext eingeben..." /><Search /></SearchBox>
            <TreeArea>
              <ReportTree />
              <VScroll>
                <ScrollArrow aria-label="Nach oben"><Tri d="M0 7h9L4.500 2z" /></ScrollArrow>
                <VThumb $h={118}><GripH /></VThumb>
                <ScrollArrow $end aria-label="Nach unten"><Tri d="M0 2h9L4.500 7z" /></ScrollArrow>
              </VScroll>
            </TreeArea>
            <HScroll>
              <ScrollArrow aria-label="Nach links"><Tri d="M7 0v9L2 4.500z" /></ScrollArrow>
              <HThumb><GripV /></HThumb>
              <ScrollArrow $w={54} aria-label="Nach rechts"><Tri d="M2 0v9l5-4.500z" /></ScrollArrow>
            </HScroll>
            <PanelTabs>
              <PanelTab $on><Icon w={14} h={13}><path d="M7 3v4M2.500 10V6.500h9V10" stroke="#333" /><path d="M5 0h4v4H5zM0 9h4v4H0zM10 9h4v4h-4z" fill={AMBER} /></Icon>Berichts Ex...</PanelTab>
              <PanelTab><Icon w={15} h={14}><g transform="scale(.55)"><Coins /></g><path d="M6 8h9M6 10.500h9M6 13h9" stroke="#111" strokeWidth="1.500" /></Icon>Feldliste</PanelTab>
            </PanelTabs>
          </Explorer>
          <Properties>
            <PanelHead><h2>Eigenschaften</h2><PanelTools /></PanelHead>
            <PropertyBody>
              <Combo $w={149} $h={22}><select aria-label="Element"><option>KopfrahmenSeite1 &nbsp;...</option></select><Caret color="#222" /></Combo>
              <PropertyTabs>
                <PropertyTab $on aria-label="Darstellung"><Icon w={14} h={14}><path d="M0 9l4-4 4 4-4 4z" fill="#111" /><path d="M5 4l4-4 5 3-5 6z" fill={RED} /></Icon></PropertyTab>
                <PropertyTab aria-label="Verhalten"><Icon w={20}><g transform="translate(0 8)"><Gear size={12} hole={5} /></g><g transform="translate(9 0)"><Gear size={11} hole={5} /></g></Icon></PropertyTab>
                <PropertyTab aria-label="Daten"><DataStack s={17} /></PropertyTab>
                <PropertyTab aria-label="Extras"><Icon w={18}><path d="M1 2l4 3 2-2-2-3q6 0 6 6l7 7q1 4-4 4l-7-7Q1 11 1 2z" fill="#000" /></Icon></PropertyTab>
                <PropertyTab aria-label="Favoriten"><Icon w={20} h={19}><path d="M10 0l2.500 7H20l-6 4.500 2 7-6-4-6 4 2-7L0 7h7.500z" fill={BLUE} /></Icon></PropertyTab>
              </PropertyTabs>
              <PropertyRow>
                <input type="text" aria-label="Innenabstand" defaultValue="0, 0, 0, 0" />
                <input type="checkbox" aria-label="Lokal" />
              </PropertyRow>
            </PropertyBody>
          </Properties>
        </Side>
      </Workspace>
    </Window>
  );
}
